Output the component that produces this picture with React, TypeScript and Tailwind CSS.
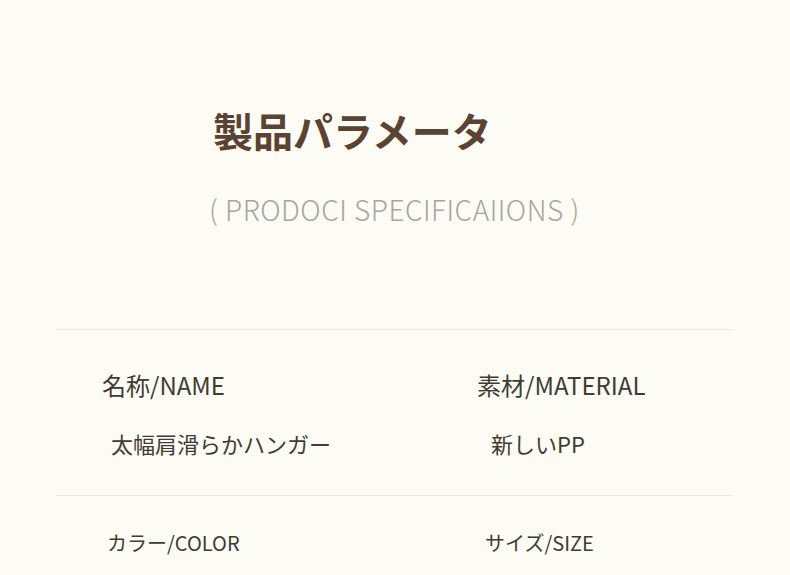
const jp = "font-['Noto_Sans_CJK_JP','Noto_Sans',sans-serif]";

function SpecCell({ text, className }: { text: string; className: string }) {
  return <div className={`${jp} text-[#403b35] leading-none ${className}`}>{text}</div>;
}

export default function App() {
  return (
    <div className="w-[790px] h-[575px] overflow-hidden bg-[#fdfcf4]">
      <header className="flex flex-col items-start pt-[110px]">
        <h1 className={`${jp} ml-[213px] text-[40px] leading-none font-bold text-[#5b4334]`}>
          製品パラメータ
        </h1>
        <p className={`${jp} ml-[209px] mt-[45px] text-[28px] leading-none font-light tracking-[0.5px] text-[#a8a59e]`}>
          ( PRODOCI SPECIFICAIIONS )
        </p>
      </header>

      <div className="mx-[56px] mt-[106px] border-t border-[#edeae0]" />

      <div className="ml-[56px] grid grid-cols-[375px_1fr] pt-[43px] pb-[41px]">
        <SpecCell text="名称/NAME" className="pl-[46px] text-[24px]" />
        <SpecCell text="素材/MATERIAL" className="pl-[46px] text-[24px]" />
        <SpecCell text="太幅肩滑らかハンガー" className="pl-[55px] mt-[35px] text-[22px]" />
        <SpecCell text="新しいPP" className="pl-[60px] mt-[35px] text-[22px]" />
      </div>

      <div className="ml-[56px] w-[676px] border-t border-[#edeae0]" />

      <div className="ml-[56px] grid grid-cols-[375px_1fr] pt-[37px]">
        <SpecCell text="カラー/COLOR" className="pl-[51px] text-[20px]" />
        <SpecCell text="サイズ/SIZE" className="pl-[54px] text-[20px]" />
      </div>
    </div>
  );
}
